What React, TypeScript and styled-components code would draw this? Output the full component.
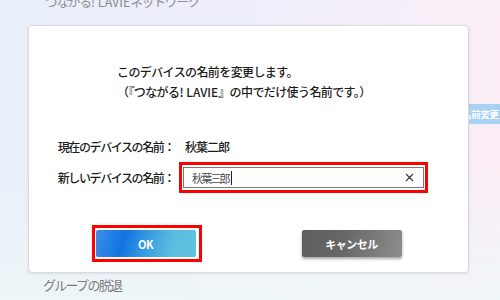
import React from "react";
import styled, { createGlobalStyle } from "styled-components";

const GlobalStyle = createGlobalStyle`
  html, body {
    margin: 0;
    padding: 0;
  }
  body {
    font-family: "Noto Sans CJK JP", "Noto Sans", sans-serif;
  }
`;

const colors = {
  ink: "#1c1c1c",
  muted: "#8a8a8e",
  highlight: "#ff0000",
  inputBorder: "#7a7a7a",
};

const Page = styled.div`
  position: relative;
  width: 500px;
  height: 300px;
  overflow: hidden;
  background:
    linear-gradient(180deg, rgba(255, 255, 255, 0) 55%, rgba(238, 246, 248, 0.9) 100%),
    linear-gradient(100deg, #e8eff9 0%, #eeeefa 45%, #f6eef8 75%, #fcedf4 100%);
  display: flex;
  flex-direction: column;
`;

const PageTitle = styled.div`
  margin: -7px 0 0 45px;
  height: 18px;
  font-size: 12.5px;
  line-height: 18px;
  letter-spacing: -1px;
  color: ${colors.muted};
`;

// latin runs keep their natural spacing inside tightened CJK text
const Latin = styled.span`
  letter-spacing: 0;
`;

const SettingRow = styled.div`
  margin-top: 93px;
  display: flex;
  justify-content: flex-end;
`;

const RenameButton = styled.div`
  width: 70px;
  height: 20px;
  margin-right: -28px;
  padding-left: 4px;
  background: #a9d1f1;
  color: #fff;
  font-size: 9.5px;
  font-weight: 700;
  line-height: 20px;
  letter-spacing: -0.3px;
  box-sizing: border-box;
`;

const LeaveLink = styled.div`
  margin: auto 0 7px 43px;
  font-size: 13px;
  line-height: 16px;
  letter-spacing: -1.7px;
  color: #7c7c80;
`;

const Overlay = styled.div`
  position: absolute;
  inset: 0;
  padding: 25px 31px 27px 28px;
  box-sizing: border-box;
  display: flex;
`;

const Dialog = styled.div`
  flex: 1;
  background: #fff;
  border: 1px solid #d9d9de;
  border-radius: 4px;
  box-shadow: 0 1px 3px rgba(0, 0, 0, 0.08);
  padding-top: 36px;
  display: flex;
  flex-direction: column;
  color: ${colors.ink};
`;

const Message = styled.div`
  margin-left: 88px;
  font-size: 12px;
  line-height: 20px;
  letter-spacing: -0.6px;
  font-weight: 500;
`;

const Form = styled.div`
  margin-top: 35px;
  display: grid;
  grid-template-columns: 150px 1fr;
  row-gap: 5px;
  align-items: center;
`;

const Label = styled.div`
  font-size: 12px;
  letter-spacing: -1.4px;
  font-weight: 500;
  text-align: right;
  line-height: 20px;
  padding-right: 5px;
`;

const Value = styled.div<{ $indent?: number }>`
  padding-left: ${({ $indent }) => $indent ?? 0}px;
  font-size: 12px;
  letter-spacing: -1px;
  font-weight: 500;
  line-height: 20px;
`;

const InputRing = styled.div`
  width: 249px;
  height: 31px;
  border: 3px solid ${colors.highlight};
  padding: 1px;
  box-sizing: border-box;
  display: flex;
  align-items: center;
`;

const InputBox = styled.div`
  flex: 1;
  height: 21px;
  border: 1px solid ${colors.inputBorder};
  box-sizing: border-box;
  display: flex;
  align-items: center;
  padding: 0 9px 0 8px;
  font-size: 11px;
  letter-spacing: -1.8px;
  color: #4a4a4a;
`;

const Caret = styled.span`
  display: inline-block;
  width: 1px;
  height: 14px;
  margin-left: 2px;
  background: #222;
`;

const ClearIcon = styled.svg`
  margin-left: auto;
  flex-shrink: 0;
`;

const ButtonRow = styled.div`
  margin-top: 37px;
  display: flex;
  justify-content: center;
  gap: 106px;
`;

const Highlight = styled.div`
  margin: -5px -6px -5px -4px;
  padding: 2px 3px 2px 1px;
  border: 3px solid ${colors.highlight};
  display: flex;
`;

const ActionButton = styled.div<{ $kind: "primary" | "secondary" }>`
  width: 100px;
  height: 27px;
  border-radius: 2px;
  display: flex;
  align-items: center;
  justify-content: center;
  color: #fff;
  font-size: 11px;
  font-weight: 700;
  letter-spacing: -0.5px;
  background: ${({ $kind }) =>
    $kind === "primary"
      ? "linear-gradient(105deg, #3b8fe8 0%, #1273e0 28%, #3a9ee2 52%, #5cbde0 75%, #62c1df 100%)"
      : "linear-gradient(105deg, #5e5e5e 0%, #666 40%, #7d7d7d 75%, #8d8d8d 100%)"};
  box-shadow: ${({ $kind }) =>
    $kind === "primary" ? "none" : "0 2px 3px rgba(0, 0, 0, 0.35)"};
`;

export default function App() {
  return (
    <>
      <GlobalStyle />
      <Page>
        <PageTitle>
          つながる<Latin>! LAVIE</Latin>ネットワーク
        </PageTitle>
        <SettingRow>
          <RenameButton>名前変更</RenameButton>
        </SettingRow>
        <LeaveLink>グループの脱退</LeaveLink>

        <Overlay>
          <Dialog>
            <Message>
              <div>このデバイスの名前を変更します。</div>
              <div>
                （『つながる<Latin>! LAVIE</Latin>』の中でだけ使う名前です。）
              </div>
            </Message>

            <Form>
              <Label>現在のデバイスの名前：</Label>
              <Value $indent={6}>秋葉二郎</Value>
              <Label>新しいデバイスの名前：</Label>
              <InputRing>
                <InputBox>
                  秋葉三郎
                  <Caret />
                  <ClearIcon width="9" height="9" viewBox="0 0 9 9">
                    <path
                      d="M1 1 L8 8 M8 1 L1 8"
                      stroke="#333"
                      strokeWidth="1.1"
                      fill="none"
                    />
                  </ClearIcon>
                </InputBox>
              </InputRing>
            </Form>

            <ButtonRow>
              <Highlight>
                <ActionButton $kind="primary">OK</ActionButton>
              </Highlight>
              <ActionButton $kind="secondary">キャンセル</ActionButton>
            </ButtonRow>
          </Dialog>
        </Overlay>
      </Page>
    </>
  );
}
